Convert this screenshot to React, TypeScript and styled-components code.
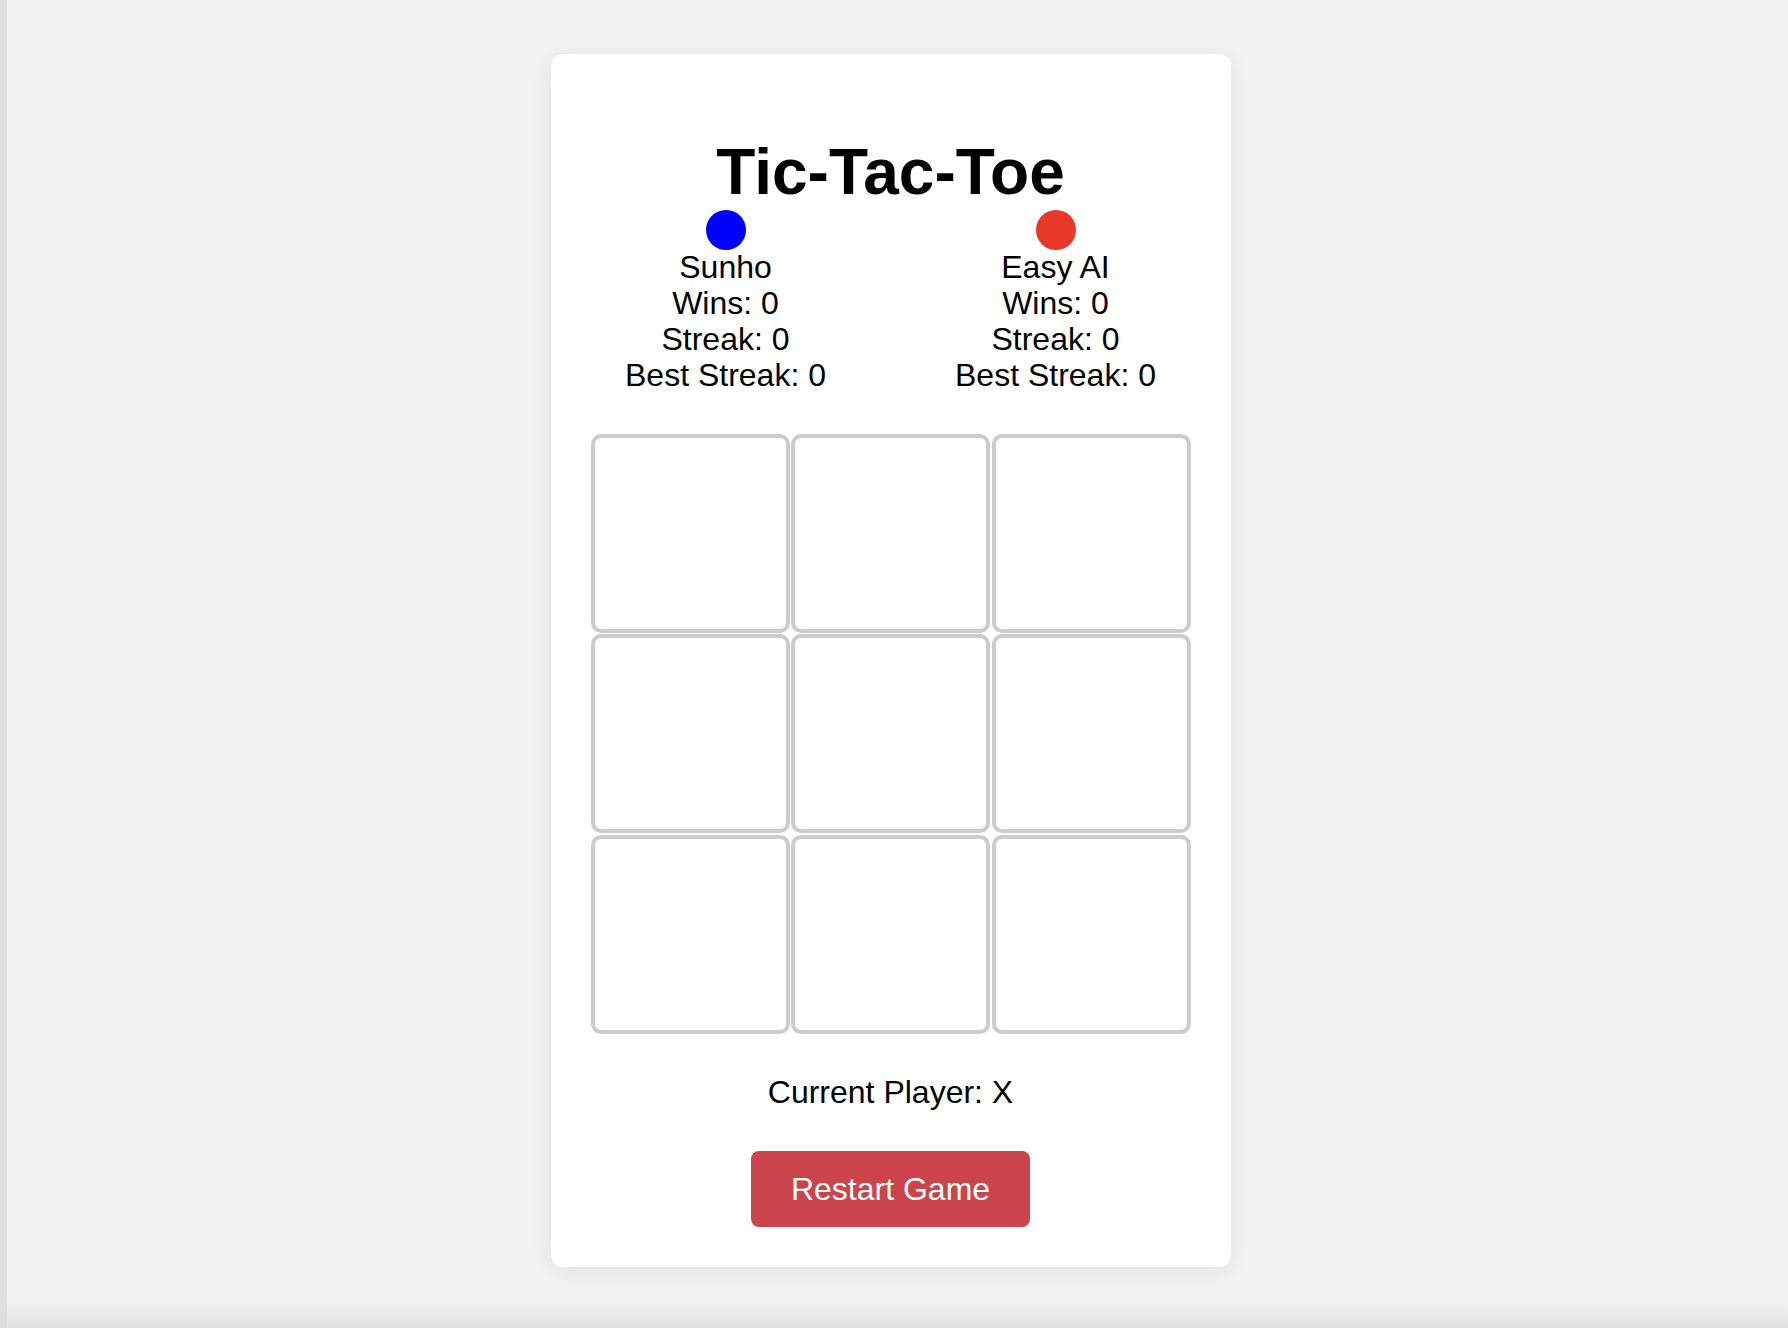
import styled, { createGlobalStyle } from "styled-components"

const GlobalStyle = createGlobalStyle`
  html, body {
    margin: 0;
    padding: 0;
  }
  body {
    font-family: "Liberation Sans", Arial, Helvetica, sans-serif;
    color: #000;
  }
`

const Page = styled.div`
  display: flex;
  justify-content: center;
  align-items: flex-start;
  min-height: 100vh;
  box-sizing: border-box;
  padding: 54px 14px 0 0;
  border-left: 7px solid #dedede;
  background: linear-gradient(to bottom, #f2f2f2 0, #f2f2f2 calc(100% - 28px), #e3e3e3 100%);
`

const Card = styled.div`
  width: 680px;
  box-sizing: border-box;
  padding: 40px;
  background: #fff;
  border-radius: 12px;
  box-shadow: 0 4px 22px rgba(0, 0, 0, 0.07);
  display: flex;
  flex-direction: column;
  align-items: center;
`

const Title = styled.h1`
  margin: 42px 0 0;
  font-size: 64px;
  font-weight: 700;
  line-height: 73.5px;
`

const Players = styled.div`
  display: grid;
  grid-template-columns: 330px 330px;
  width: 660px;
`

const Player = styled.div`
  display: flex;
  flex-direction: column;
  align-items: center;
  font-size: 32px;
  line-height: 36px;
`

const Dot = styled.div<{ $color: string }>`
  width: 40px;
  height: 40px;
  border-radius: 50%;
  background: ${(p) => p.$color};
  margin-bottom: -1px;
`

const Board = styled.div`
  margin-top: 41px;
  display: grid;
  grid-template-columns: repeat(3, 1fr);
  grid-template-rows: repeat(3, 1fr);
  gap: 1.5px;
  width: 600px;
  height: 600px;
`

const Cell = styled.button`
  box-sizing: border-box;
  background: #fff;
  border: 4px solid #cccccc;
  border-radius: 10px;
  padding: 0;
  cursor: pointer;
`

const Status = styled.div`
  margin-top: 40px;
  font-size: 32px;
  line-height: 36px;
`

const RestartButton = styled.button`
  margin-top: 41px;
  padding: 20px 40px;
  border: none;
  border-radius: 8px;
  background: #cb444b;
  color: #fff;
  font-family: "Liberation Sans", Arial, Helvetica, sans-serif;
  font-size: 32px;
  line-height: 36px;
  cursor: pointer;
`

const players = [
  { name: "Sunho", color: "#0000ff" },
  { name: "Easy AI", color: "#e9372a" },
]

export default function App() {
  return (
    <>
      <GlobalStyle />
      <Page>
        <Card>
          <Title>Tic-Tac-Toe</Title>
          <Players>
            {players.map((p) => (
              <Player key={p.name}>
                <Dot $color={p.color} />
                <div>{p.name}</div>
                <div>Wins: 0</div>
                <div>Streak: 0</div>
                <div>Best Streak: 0</div>
              </Player>
            ))}
          </Players>
          <Board>
            {Array.from({ length: 9 }).map((_, i) => (
              <Cell key={i} />
            ))}
          </Board>
          <Status>Current Player: X</Status>
          <RestartButton>Restart Game</RestartButton>
        </Card>
      </Page>
    </>
  )
}
